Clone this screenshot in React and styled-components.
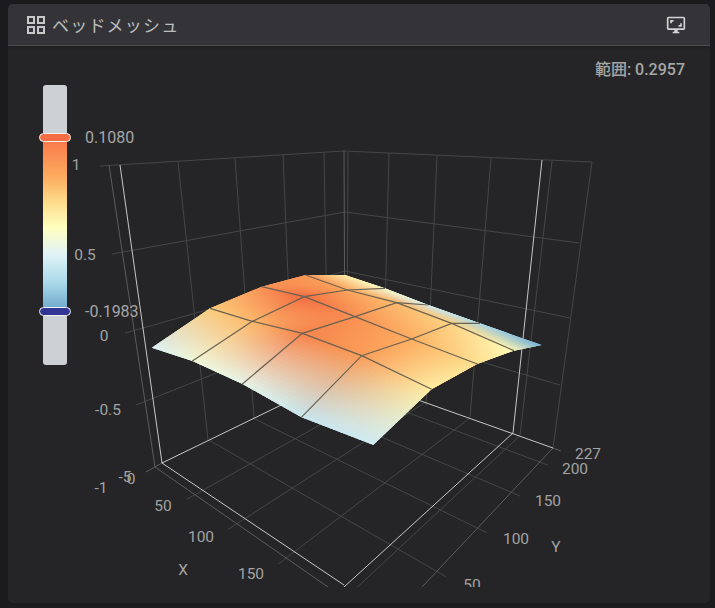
import styled, { createGlobalStyle } from "styled-components";

const GlobalStyle = createGlobalStyle`
  html, body {
    margin: 0;
    height: 100%;
    background: #1b1b1d;
    font-family: Roboto, "Noto Sans CJK JP", sans-serif;
  }
`;

const Card = styled.section`
  display: flex;
  flex-direction: column;
  width: 702px;
  height: 599px;
  margin: 4px 0 0 8px;
  border-radius: 5px;
  overflow: hidden;
  background: #252527;
`;

const Header = styled.header`
  display: flex;
  align-items: center;
  justify-content: space-between;
  height: 41px;
  padding: 0 24px 0 16px;
  background: #343438;
  border-bottom: 1px solid #4d4d50;
  box-shadow: 0 1px 3px rgba(0, 0, 0, 0.3);
  z-index: 1;
`;

const Title = styled.div`
  display: flex;
  align-items: center;
  gap: 4px;
  font-size: 17px;
  letter-spacing: 1.2px;
  color: #bdbdbd;
`;

const Icon = styled.svg`
  display: block;
  fill: ${(p) => p.$color || "#c8c8c8"};
`;

const Body = styled.div`
  position: relative;
  flex: 1;
  padding-bottom: 16px;
`;

const Range = styled.div`
  position: absolute;
  top: 14px;
  right: 25px;
  font-size: 16px;
  font-weight: 500;
  line-height: 20px;
  color: #a6a6a6;
`;

const Chart = styled.svg`
  display: block;
  width: 702px;
  height: 541px;
`;

const GridLine = styled.line`
  stroke: ${(p) => (p.$tone === "white" ? "#f0f0f0" : p.$tone === "axis" ? "#5c5c5e" : "#464648")};
  stroke-width: ${(p) => (p.$tone === "white" ? 0.8 : 1)};
`;

const MeshLine = styled.polyline`
  fill: none;
  stroke: #6a6253;
  stroke-width: 1.2;
`;

const AxisText = styled.text`
  font-family: Roboto, sans-serif;
  font-size: 15.5px;
  fill: #a3a3a3;
  text-anchor: middle;
  dominant-baseline: central;
`;

const Slider = styled.div`
  position: absolute;
  left: 31px;
  top: 39px;
  display: flex;
  flex-direction: column;
`;

const TrackEnd = styled.div`
  width: 24px;
  height: ${(p) => p.$height}px;
  margin-left: 4px;
  background: #cdd0d5;
  border-radius: ${(p) => (p.$top ? "3px 3px 0 0" : "0 0 3px 3px")};
`;

const TrackFill = styled.div`
  width: 24px;
  height: 165px;
  margin-left: 4px;
  background: linear-gradient(
    #f97b4b 0%,
    #fdae61 22%,
    #fee090 38%,
    #ffffbf 52%,
    #e0f3f8 68%,
    #abd9e9 85%,
    #74add1 100%
  );
`;

const HandleRow = styled.div`
  display: flex;
  align-items: center;
  gap: 14px;
  height: 9px;
`;

const Handle = styled.div`
  width: 32px;
  height: 9px;
  box-sizing: border-box;
  border: 1px solid #f2f2f2;
  border-radius: 5px;
  background: ${(p) => p.$color};
`;

const HandleLabel = styled.span`
  font-size: 16px;
  line-height: 20px;
  color: #a6a6a6;
`;

const stops = [
  [0, [116, 173, 209]],
  [0.15, [171, 217, 233]],
  [0.32, [224, 243, 248]],
  [0.48, [255, 255, 191]],
  [0.62, [254, 224, 144]],
  [0.78, [253, 174, 97]],
  [1, [244, 109, 67]],
];

function colormap(t) {
  for (let i = 1; i < stops.length; i++) {
    if (t <= stops[i][0]) {
      const [a, ca] = stops[i - 1];
      const [b, cb] = stops[i];
      const k = (t - a) / (b - a);
      return ca.map((c, n) => c + (cb[n] - c) * k);
    }
  }
  return stops[stops.length - 1][1];
}

// surface vertices, read off the picture, in page pixels
const toPage = ([x, y]) => [x / 3 + 140, y / 3 + 260];
const vertices = [
  [[35, 263], [210, 145], [365, 80], [497, 45], [615, 45]],
  [[157, 303], [337, 184], [493, 110], [622, 90], [735, 85]],
  [[307, 372], [487, 220], [645, 170], [770, 128], [865, 135]],
  [[484, 472], [665, 287], [815, 237], [935, 190], [1020, 190]],
  [[700, 555], [875, 388], [1012, 312], [1122, 272], [1205, 255]],
].map((row) => row.map(toPage));

const heights = [
  [0.3, 0.68, 0.86, 0.86, 0.55],
  [0.4, 0.74, 1, 0.8, 0.45],
  [0.36, 0.92, 0.88, 0.74, 0.3],
  [0.24, 0.84, 0.78, 0.66, 0.16],
  [0.27, 0.56, 0.62, 0.5, 0.02],
];
const colors = heights.map((row) => row.map(colormap));

function bilinear(grid, i, j, u, v) {
  const a = grid[i][j];
  const b = grid[i + 1][j];
  const c = grid[i + 1][j + 1];
  const d = grid[i][j + 1];
  return a.map(
    (_, n) =>
      a[n] * (1 - u) * (1 - v) + b[n] * u * (1 - v) + c[n] * u * v + d[n] * (1 - u) * v
  );
}

const STEPS = 20;
const patches = [];
for (let i = 0; i < 4; i++) {
  for (let j = 0; j < 4; j++) {
    for (let a = 0; a < STEPS; a++) {
      for (let b = 0; b < STEPS; b++) {
        const u0 = a / STEPS;
        const u1 = (a + 1) / STEPS;
        const v0 = b / STEPS;
        const v1 = (b + 1) / STEPS;
        const points = [
          [u0, v0],
          [u1, v0],
          [u1, v1],
          [u0, v1],
        ]
          .map(([u, v]) => bilinear(vertices, i, j, u, v).join(","))
          .join(" ");
        const [r, g, bl] = bilinear(colors, i, j, (a + 0.5) / STEPS, (b + 0.5) / STEPS);
        patches.push({ points, fill: `rgb(${r | 0},${g | 0},${bl | 0})` });
      }
    }
  }
}

const outline = [
  ...vertices[0],
  ...vertices.slice(1).map((row) => row[4]),
  ...vertices[4].slice(0, 4).reverse(),
  ...vertices.slice(1, 4).reverse().map((row) => row[0]),
]
  .map((p) => p.join(","))
  .join(" ");

const meshLines = [
  ...[1, 2, 3].map((j) => vertices.map((row) => row[j])),
  ...[1, 2, 3].map((i) => vertices[i]),
].map((line) => line.map((p) => p.join(",")).join(" "));

// floor box corners and its two vanishing points
const A = [162, 463];
const B = [345, 374];
const C = [513, 433];
const toX = [-296, 149];
const toY = [848, 130];

function meet(p, q, a, b) {
  const d1 = [q[0] - p[0], q[1] - p[1]];
  const d2 = [b[0] - a[0], b[1] - a[1]];
  const t = ((a[0] - p[0]) * d2[1] - (a[1] - p[1]) * d2[0]) / (d1[0] * d2[1] - d1[1] * d2[0]);
  return [p[0] + d1[0] * t, p[1] + d1[1] * t];
}

const floorLines = [
  ...[[547.7, 465], [520, 496], [486.7, 532.7], [446, 576.7]].map((p) => [p, meet(p, toX, A, B)]),
  ...[[186.7, 499.3], [228.3, 529.3], [278.3, 564], [336, 607]].map((p) => [p, meet(p, toY, B, C)]),
];

const wallLines = [
  [100, 166, 344, 151], [344, 151, 592, 162],
  [112, 254, 345, 212], [345, 212, 579, 243],
  [125, 333, 345, 271], [345, 271, 570, 318],
  [136, 405, 345, 322], [345, 322, 560, 385],
  [178, 162, 208, 440], [235, 158, 254, 418], [283, 154, 293, 400], [324, 152, 328, 384],
  [348, 152, 347, 375], [389, 153, 383, 389], [437, 156, 426, 406], [491, 158, 470, 417],
  [552, 161, 520, 435], [592, 162, 553, 448],
];

const axisLines = [
  [109, 165, 155, 467], [344, 151, 345, 374], [155, 467, 328, 587],
  [553, 448, 422, 587], [146, 472, 162, 463], [553, 448, 561, 451],
];

const whiteLines = [
  [120, 165, 162, 463], [542, 160, 513, 433], [162, 463, 344, 585],
  [162, 463, 345, 374], [345, 374, 553, 448], [513, 433, 344, 587],
];

const labels = [
  ["1", 76, 165], ["0.5", 85, 255], ["0", 104, 336], ["-0.5", 108, 410], ["-1", 101, 488],
  ["-5", 125, 477], ["0", 131, 479], ["50", 163, 506], ["100", 201, 537], ["150", 251, 574],
  ["X", 183, 570], ["227", 588, 454], ["200", 575, 469], ["150", 548, 501], ["100", 516, 539],
  ["50", 472, 585], ["Y", 556, 547],
];

function Surface() {
  return (
    <g>
      <clipPath id="surface-edge">
        <polygon points={outline} />
      </clipPath>
      <g clipPath="url(#surface-edge)">
        {patches.map((p, i) => (
          <polygon key={i} points={p.points} fill={p.fill} stroke={p.fill} strokeWidth="1.4" />
        ))}
      </g>
      {meshLines.map((points) => (
        <MeshLine key={points} points={points} />
      ))}
    </g>
  );
}

function Lines({ list, tone }) {
  return list.map(([x1, y1, x2, y2], i) => (
    <GridLine key={i} x1={x1} y1={y1} x2={x2} y2={y2} $tone={tone} />
  ));
}

function MeshChart() {
  return (
    <Chart viewBox="8 46 702 541">
      <Lines list={wallLines} />
      <Lines list={floorLines.map(([p, q]) => [...p, ...q])} />
      <Lines list={axisLines} tone="axis" />
      <Lines list={whiteLines} tone="white" />
      <Surface />
      {labels.map(([text, x, y], i) => (
        <AxisText key={i} x={x} y={y}>
          {text}
        </AxisText>
      ))}
    </Chart>
  );
}

export default function App() {
  return (
    <>
      <GlobalStyle />
      <Card>
        <Header>
          <Title>
            <Icon width="24" height="24" viewBox="0 0 24 24">
              <path d="M3 11H11V3H3M5 5H9V9H5M13 21H21V13H13M15 15H19V19H15M3 21H11V13H3M5 15H9V19H5M13 3V11H21V3M19 9H15V5H19Z" />
            </Icon>
            ベッドメッシュ
          </Title>
          <Icon width="20" height="20" viewBox="0 0 24 24" $color="#d4d4d4">
            <path d="M9,6H5V10H7V8H9V6M19,10H17V12H15V14H19V10M21,16H3V4H21M21,2H3C1.89,2 1,2.89 1,4V16A2,2 0 0,0 3,18H10V20H8V22H16V20H14V18H21A2,2 0 0,0 23,16V4C23,2.89 22.1,2 21,2Z" />
          </Icon>
        </Header>
        <Body>
          <MeshChart />
          <Range>範囲: 0.2957</Range>
          <Slider>
            <TrackEnd $height={48} $top />
            <HandleRow>
              <Handle $color="#f46d43" />
              <HandleLabel>0.1080</HandleLabel>
            </HandleRow>
            <TrackFill />
            <HandleRow>
              <Handle $color="#313695" />
              <HandleLabel>-0.1983</HandleLabel>
            </HandleRow>
            <TrackEnd $height={49} />
          </Slider>
        </Body>
      </Card>
    </>
  );
}
